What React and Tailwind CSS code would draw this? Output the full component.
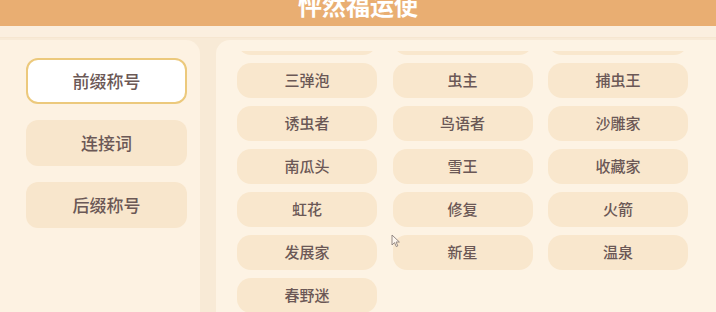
const cjk = { fontFamily: '"Noto Sans CJK SC", "Noto Sans", sans-serif' };

const tabs = ["前缀称号", "连接词", "后缀称号"];

const words = [
  "", "", "",
  "三弹泡", "虫主", "捕虫王",
  "诱虫者", "鸟语者", "沙雕家",
  "南瓜头", "雪王", "收藏家",
  "虹花", "修复", "火箭",
  "发展家", "新星", "温泉",
  "春野迷",
];

export default function App() {
  return (
    <div
      className="relative w-[716px] h-[312px] overflow-hidden bg-[#f8ead6] flex flex-col"
      style={cjk}
    >
      {/* header */}
      <div className="h-[26px] shrink-0 bg-[#e9ae72] flex justify-center items-start overflow-hidden">
        <span className="mt-[-7px] text-[24px] leading-[24px] font-bold text-white">
          怦然福运使
        </span>
      </div>
      <div className="h-[12px] shrink-0 bg-[#fbefdf] border-b border-[#f6e6d0]" />

      {/* body */}
      <div className="flex flex-1 min-h-0 pt-[2px]">
        {/* left tabs */}
        <div className="w-[200px] shrink-0 bg-[#fdf2e2] rounded-tr-[14px] pt-[18px] pl-[26px] flex flex-col gap-[16px]">
          {tabs.map((t, i) => (
            <div
              key={t}
              className={
                i === 0
                  ? "w-[161px] h-[46px] rounded-[12px] bg-white border-2 border-[#ecc97c] flex items-center justify-center text-[17px] font-medium text-[#6b5856]"
                  : "w-[161px] h-[46px] rounded-[12px] bg-[#f8e6cc] flex items-center justify-center text-[17px] font-medium text-[#6b5856]"
              }
            >
              {t}
            </div>
          ))}
        </div>

        {/* word grid */}
        <div className="flex-1 ml-[16px] bg-[#fdf3e4] rounded-tl-[14px] pt-[11px] pl-[21px]">
          <div className="h-full overflow-hidden">
            <div className="-mt-[31px] grid grid-cols-[140px_140px_140px] gap-x-[15.5px] gap-y-[8px]">
              {words.map((w, i) => (
                <div
                  key={i}
                  className="h-[35px] rounded-[14px] bg-[#f9e7cd] flex items-center justify-center text-[15px] font-medium text-[#6b5856]"
                >
                  {w}
                </div>
              ))}
            </div>
          </div>
        </div>
      </div>

      {/* mouse cursor */}
      <svg
        className="absolute left-[391px] top-[234px]"
        width="10"
        height="14"
        viewBox="0 0 10 14"
      >
        <path
          d="M1 1 L1 11 L3.5 8.6 L5.3 12.6 L6.8 11.9 L5.1 8 L8.4 8 Z"
          fill="#fdf6ee"
          stroke="#8a7f7a"
          strokeWidth="0.9"
          strokeLinejoin="round"
        />
      </svg>
    </div>
  );
}
